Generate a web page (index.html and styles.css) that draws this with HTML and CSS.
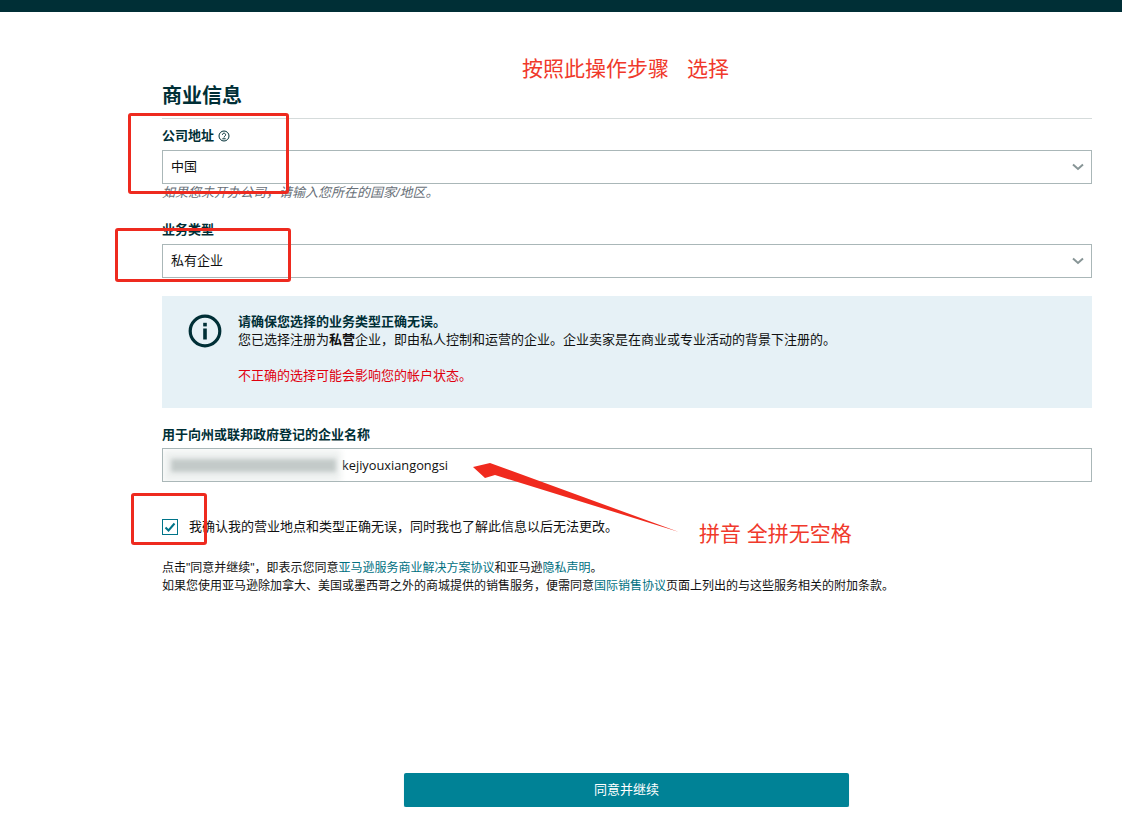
FILE: index.html
```html
<!DOCTYPE html>
<html lang="zh">
<head>
    <meta charset="UTF-8">
    <title>商业信息</title>
    <link rel="stylesheet" href="styles.css">
</head>
<body>
    <div class="topbar"></div>
    <div class="page">
        <h1>商业信息</h1>

        <label class="field-label first">公司地址
            <svg class="help-icon" viewBox="0 0 12 12" width="12" height="12">
                <circle cx="6" cy="6" r="5" fill="none" stroke="#002f36" stroke-width="1"/>
                <path d="M4.4 4.8a1.6 1.6 0 1 1 2.6 1.2c-.6.5-1 .8-1 1.5M4.3 8.8h3.4" fill="none" stroke="#002f36" stroke-width="1"/>
            </svg>
        </label>
        <div class="select-box">中国
            <svg class="chevron" viewBox="0 0 12 8" width="12" height="8"><path d="M1 1.5l5 4.5 5-4.5" fill="none" stroke="#879596" stroke-width="2"/></svg>
        </div>
        <div class="hint">如果您未开办公司，请输入您所在的国家/地区。</div>

        <label class="field-label second">业务类型</label>
        <div class="select-box">私有企业
            <svg class="chevron" viewBox="0 0 12 8" width="12" height="8"><path d="M1 1.5l5 4.5 5-4.5" fill="none" stroke="#879596" stroke-width="2"/></svg>
        </div>

        <div class="info-box">
            <svg class="info-icon" viewBox="0 0 34 34" width="34" height="34">
                <circle cx="17" cy="17" r="14.8" fill="none" stroke="#002f36" stroke-width="3.2"/>
                <rect x="15.2" y="14.5" width="3.6" height="11" fill="#002f36"/>
                <rect x="15.2" y="8.8" width="3.6" height="3.6" fill="#002f36"/>
            </svg>
            <div class="info-text">
                <div class="info-title">请确保您选择的业务类型正确无误。</div>
                <div>您已选择注册为<b>私营</b>企业，即由私人控制和运营的企业。企业卖家是在商业或专业活动的背景下注册的。</div>
                <div class="info-warn">不正确的选择可能会影响您的帐户状态。</div>
            </div>
        </div>

        <label class="field-label third">用于向州或联邦政府登记的企业名称</label>
        <div class="text-box">
            <span class="name-value">kejiyouxiangongsi</span>
            <span class="smudge-halo"></span>
            <span class="smudge"></span>
        </div>

        <div class="confirm-row">
            <span class="checkbox">
                <svg viewBox="0 0 16 16" width="16" height="16"><path d="M3.5 8.5l3 3 6-7" fill="none" stroke="#007489" stroke-width="2"/></svg>
            </span>
            <span>我确认我的营业地点和类型正确无误，同时我也了解此信息以后无法更改。</span>
        </div>

        <p class="legal">点击"同意并继续"，即表示您同意<a href="#">亚马逊服务商业解决方案协议</a>和亚马逊<a href="#">隐私声明</a>。<br>如果您使用亚马逊除加拿大、美国或墨西哥之外的商城提供的销售服务，便需同意<a href="#">国际销售协议</a>页面上列出的与这些服务相关的附加条款。</p>

        <div class="actions">
            <button class="primary-btn">同意并继续</button>
        </div>
    </div>

    <!-- annotations drawn over the screenshot -->
    <div class="note note-top">按照此操作步骤<span class="note-gap">选择</span></div>
    <div class="note note-pinyin">拼音 全拼无空格</div>
    <div class="mark mark-1"></div>
    <div class="mark mark-2"></div>
    <div class="mark mark-3"></div>
    <svg class="arrow" viewBox="0 0 212 76" width="212" height="76">
        <path d="M3 7L20 3 209 72 25 15 15 18Z" fill="#f02a1e"/>
    </svg>
</body>
</html>
```

FILE: styles.css
```css
* {
    box-sizing: border-box;
}
body {
    margin: 0;
    background: #fff;
    color: #111;
    font-family: "Liberation Sans", "Noto Sans CJK SC", sans-serif;
    font-size: 13px;
    line-height: 18px;
}
.topbar {
    height: 12px;
    background: #002f36;
}
.page {
    width: 930px;
    margin-left: 162px;
}
h1 {
    margin: 70px 0 0;
    padding-bottom: 6px;
    height: 37px;
    font-size: 20px;
    line-height: 28px;
    font-weight: 700;
    color: #002f36;
    border-bottom: 1px solid #d5dbdb;
}
.field-label {
    display: block;
    font-weight: 700;
    color: #002f36;
}
.field-label.first {
    margin-top: 8px;
    margin-bottom: 5px;
}
.field-label.second {
    margin-top: 19px;
    margin-bottom: 5px;
}
.field-label.third {
    margin-top: 18px;
    margin-bottom: 4px;
}
.help-icon {
    vertical-align: -2px;
}
.select-box,
.text-box {
    position: relative;
    display: flex;
    align-items: center;
    justify-content: space-between;
    height: 34px;
    padding: 0 8px;
    border: 1px solid #aab7b8;
    background: #fff;
}
.chevron {
    margin-right: -1px;
}
.hint {
    font-style: italic;
    color: #687078;
}
.info-box {
    display: flex;
    height: 112px;
    margin-top: 18px;
    padding: 17px 26px;
    background: #e6f1f6;
}
.info-icon {
    flex: none;
    margin-top: 1px;
}
.info-text {
    margin-left: 16px;
}
.info-title {
    font-weight: 700;
    color: #002f36;
}
.info-warn {
    margin-top: 18px;
    color: #e0000f;
}
.text-box {
    justify-content: flex-start;
    overflow: hidden;
}
.name-value {
    margin-left: 171px;
    font-family: "Open Sans", sans-serif;
    font-size: 12.8px;
}
/* blurred part of the company name */
.smudge-halo {
    position: absolute;
    left: 0;
    top: 1px;
    width: 178px;
    height: 32px;
    background: #eef1f0;
    filter: blur(3px);
}
.smudge {
    position: absolute;
    left: 8px;
    top: 10px;
    width: 165px;
    height: 13px;
    background: #c3cac9;
    filter: blur(2px);
}
.confirm-row {
    display: flex;
    align-items: center;
    gap: 11px;
    margin-top: 36px;
}
.checkbox {
    display: block;
    width: 16px;
    height: 16px;
    border: 1px solid #007489;
    line-height: 0;
}
.checkbox svg {
    margin: -1px;
}
.legal {
    margin: 23px 0 0;
    font-size: 12px;
}
.legal a {
    color: #00707f;
    text-decoration: none;
}
.actions {
    margin-top: 178px;
    padding-left: 242px;
}
.primary-btn {
    display: block;
    width: 445px;
    height: 34px;
    border: none;
    border-radius: 2px;
    background: #008296;
    box-shadow: 0 1px 1px #9fc7d3;
    color: #fff;
    font: inherit;
}
.note {
    position: absolute;
    color: #f0392b;
    font-size: 21px;
    line-height: 28px;
}
.note-top {
    left: 522px;
    top: 55px;
}
.note-gap {
    margin-left: 18px;
}
.note-pinyin {
    left: 699px;
    top: 520px;
}
.mark {
    position: absolute;
    border: 3px solid #ee2a1f;
    border-radius: 3px;
}
.mark-1 {
    left: 128px;
    top: 113px;
    width: 161px;
    height: 81px;
}
.mark-2 {
    left: 115px;
    top: 228px;
    width: 176px;
    height: 54px;
}
.mark-3 {
    left: 131px;
    top: 493px;
    width: 76px;
    height: 52px;
}
.arrow {
    position: absolute;
    left: 470px;
    top: 460px;
}
```
